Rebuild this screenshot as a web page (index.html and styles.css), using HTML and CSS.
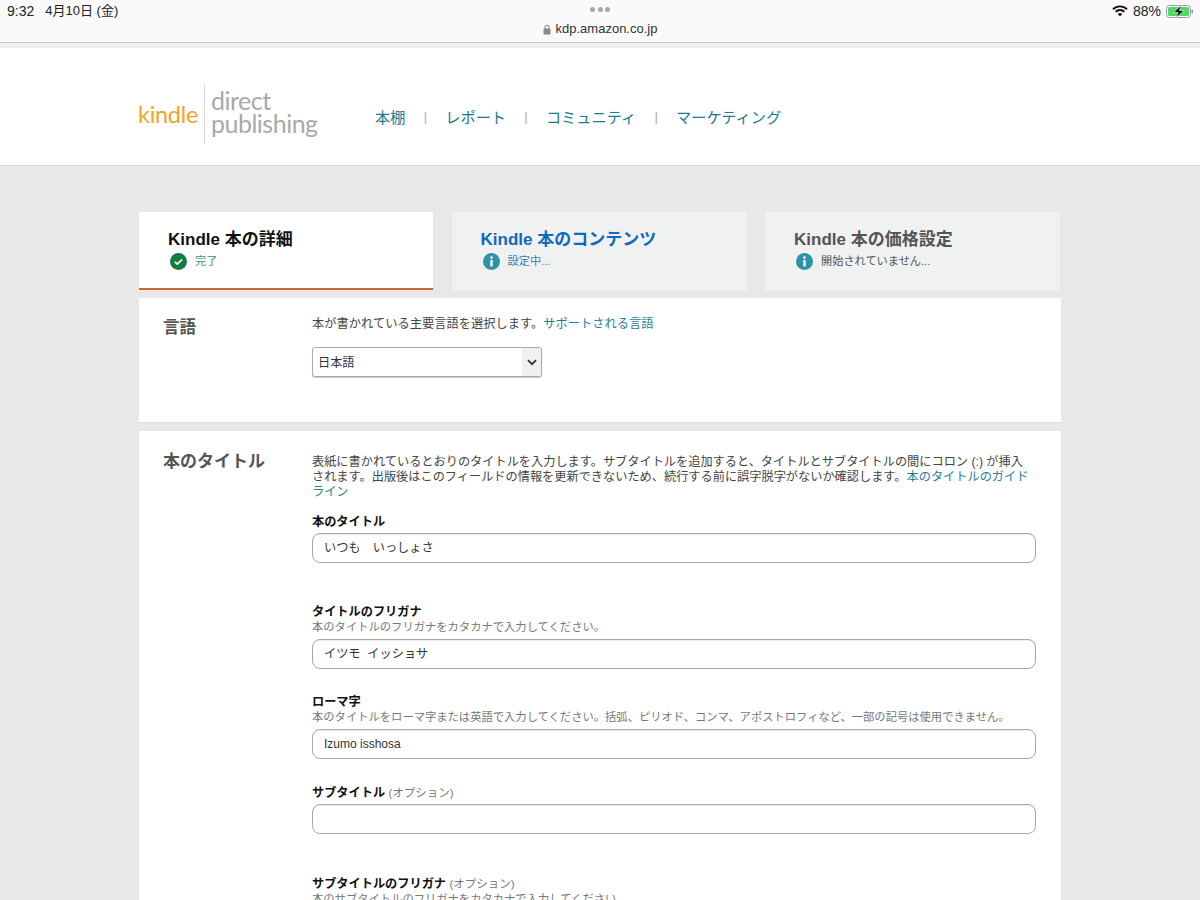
FILE: index.html
```html
<!DOCTYPE html>
<html lang="ja">
<head>
<meta charset="utf-8">
<title>Kindle Direct Publishing</title>
<link rel="stylesheet" href="styles.css">
</head>
<body>
<div class="browser">
  <div class="status">
    <div class="status-left"><span class="clock">9:32</span><span>4月10日 (金)</span></div>
    <div class="status-center">
      <div class="dots"><i></i><i></i><i></i></div>
      <div class="url">
        <svg class="lock" width="8" height="11" viewBox="0 0 8 11"><path d="M2 5V3.2a2 2 0 0 1 4 0V5" fill="none" stroke="#8a8a8a" stroke-width="1.1"/><rect x="0.5" y="4.6" width="7" height="6" rx="1" fill="#8a8a8a"/></svg>
        <span>kdp.amazon.co.jp</span>
      </div>
    </div>
    <div class="status-right">
      <svg width="16" height="12" viewBox="0 0 16 12"><path d="M1 4.2a10 10 0 0 1 14 0" fill="none" stroke="#111" stroke-width="1.9"/><path d="M3.6 6.8a6.3 6.3 0 0 1 8.8 0" fill="none" stroke="#111" stroke-width="1.9"/><path d="M8 11.5 5.8 9.1a3 3 0 0 1 4.4 0z" fill="#111"/></svg>
      <span>88%</span>
      <svg width="27" height="13" viewBox="0 0 27 13"><rect x="0.5" y="0.5" width="24" height="12" rx="3" fill="#fff" stroke="#9a9a9a"/><rect x="2" y="2" width="21" height="9" rx="1.5" fill="#4cd964"/><rect x="25.5" y="4.5" width="1.5" height="4" rx="0.7" fill="#9a9a9a"/><path d="M15.5 0 7.5 7.5h4.5L10 13l8-7.5h-4.5z" fill="#111" stroke="#fff" stroke-width="0.6"/></svg>
    </div>
  </div>
</div>

<header class="site">
  <div class="logo">
    <span class="logo-kindle">kindle</span>
    <span class="logo-rest"><span>direct</span><span>publishing</span></span>
  </div>
  <nav class="nav">
    <a>本棚</a><b>|</b><a>レポート</a><b>|</b><a>コミュニティ</a><b>|</b><a>マーケティング</a>
  </nav>
</header>

<main class="main">
  <div class="tabs">
    <div class="tab tab-active">
      <div class="tab-title">Kindle 本の詳細</div>
      <div class="tab-state state-done">
        <svg width="17" height="17" viewBox="0 0 17 17"><circle cx="8.5" cy="8.5" r="8.5" fill="#127d3f"/><path d="M4.8 8.8 7.3 11l4.9-4.7" fill="none" stroke="#fff" stroke-width="1.7"/></svg>
        <span>完了</span>
      </div>
    </div>
    <div class="tab">
      <div class="tab-title title-blue">Kindle 本のコンテンツ</div>
      <div class="tab-state state-blue">
        <svg width="17" height="17" viewBox="0 0 17 17"><circle cx="8.5" cy="8.5" r="8.5" fill="#2f93a8"/><circle cx="8.5" cy="4.6" r="1.3" fill="#fff"/><rect x="7.3" y="7" width="2.4" height="6.4" fill="#fff"/></svg>
        <span>設定中...</span>
      </div>
    </div>
    <div class="tab">
      <div class="tab-title title-gray">Kindle 本の価格設定</div>
      <div class="tab-state state-gray">
        <svg width="17" height="17" viewBox="0 0 17 17"><circle cx="8.5" cy="8.5" r="8.5" fill="#2f93a8"/><circle cx="8.5" cy="4.6" r="1.3" fill="#fff"/><rect x="7.3" y="7" width="2.4" height="6.4" fill="#fff"/></svg>
        <span>開始されていません...</span>
      </div>
    </div>
  </div>

  <section class="panel panel-lang">
    <h2 class="panel-head">言語</h2>
    <div class="panel-body">
      <p class="desc">本が書かれている主要言語を選択します。<a>サポートされる言語</a></p>
      <div class="select">
        <span class="select-text">日本語</span>
        <span class="select-btn"><svg width="10" height="7" viewBox="0 0 10 7"><path d="M1 1.2 5 5.2l4-4" fill="none" stroke="#333" stroke-width="1.8"/></svg></span>
      </div>
    </div>
  </section>

  <section class="panel panel-title">
    <h2 class="panel-head head-large">本のタイトル</h2>
    <div class="panel-body body-title">
      <p class="desc desc-block">表紙に書かれているとおりのタイトルを入力します。サブタイトルを追加すると、タイトルとサブタイトルの間にコロン (:) が挿入されます。出版後はこのフィールドの情報を更新できないため、続行する前に誤字脱字がないか確認します。<a>本のタイトルのガイドライン</a></p>
      <div class="field f1">
        <label>本のタイトル</label>
        <div class="input">いつも　いっしょさ</div>
      </div>
      <div class="field f2">
        <label>タイトルのフリガナ</label>
        <small>本のタイトルのフリガナをカタカナで入力してください。</small>
        <div class="input">イツモ&nbsp; イッショサ</div>
      </div>
      <div class="field f3">
        <label>ローマ字</label>
        <small>本のタイトルをローマ字または英語で入力してください。括弧、ピリオド、コンマ、アポストロフィなど、一部の記号は使用できません。</small>
        <div class="input input-latin">Izumo isshosa</div>
      </div>
      <div class="field f4">
        <label>サブタイトル <em>(オプション)</em></label>
        <div class="input"></div>
      </div>
      <div class="field f5">
        <label>サブタイトルのフリガナ <em>(オプション)</em></label>
        <small>本のサブタイトルのフリガナをカタカナで入力してください。</small>
      </div>
    </div>
  </section>
</main>
</body>
</html>
```
FILE: styles.css
```css
* { box-sizing: border-box; }
html, body { margin: 0; height: 900px; overflow: hidden; }
body {
  background: #e8e8e8;
  font-family: "Liberation Sans", "Noto Sans CJK JP", sans-serif;
  color: #333;
}
a { color: #1f7f95; }

.browser { background: #f0f0f0; height: 48px; }
.status {
  height: 43px;
  background: #fafafa;
  border-bottom: 1px solid #c9c9c9;
  display: grid;
  grid-template-columns: 1fr auto 1fr;
  padding: 0 7px 0 7px;
}
.status-left { display: flex; gap: 11px; font-size: 13px; color: #222; padding-top: 3px; line-height: 16px; }
.clock { font-size: 14px; }
.status-center { display: flex; flex-direction: column; align-items: center; padding-top: 7px; }
.dots { display: flex; gap: 2.5px; height: 7px; }
.dots i { width: 5px; height: 5px; border-radius: 50%; background: #a8a8a8; display: block; }
.url { display: flex; align-items: center; gap: 5px; font-size: 13px; color: #333; margin-top: 7px; line-height: 16px; }
.status-right { display: flex; justify-content: flex-end; align-items: flex-start; gap: 5px; font-size: 14px; color: #222; padding-top: 3px; line-height: 16px; }
.status-right svg { margin-top: 2px; }

.site {
  height: 118px;
  background: #fff;
  border-bottom: 1px solid #d4d4d4;
  display: flex;
  align-items: center;
  padding-left: 138px;
}
.logo { display: flex; align-items: center; width: 237px; height: 60px; margin-top: 15px; }
.logo-kindle { font-family: Lato, sans-serif; font-size: 23.5px; color: #f7a11f; width: 66px; letter-spacing: -0.3px; }
.logo-rest {
  display: flex; flex-direction: column;
  border-left: 1px solid #d8d8d8;
  height: 60px;
  padding-left: 6px;
  font-family: Lato, sans-serif;
  font-size: 25px;
  line-height: 23px;
  color: #a9a9a9;
  letter-spacing: -0.5px;
  padding-top: 5px;
}
.nav { display: flex; align-items: center; font-size: 15.2px; margin-top: 19px; }
.nav a { color: #1d7a8f; }
.nav b { color: #aaa; font-weight: normal; font-size: 13px; margin: 0 18.25px; }

.main { width: 922px; margin-left: 139px; padding-top: 46px; }
.tabs { display: grid; grid-template-columns: 294px 295px 295px; column-gap: 18.5px; }
.tab { height: 78px; background: #f0f1f1; padding: 18px 0 0 29px; }
.tab-active { background: #fff; border-bottom: 2px solid #c9692a; }
.tab-title { font-size: 17px; font-weight: bold; line-height: 20px; color: #111; }
.title-blue { color: #0f69bd; }
.title-gray { color: #555; }
.tab-state { display: flex; align-items: center; gap: 8px; font-size: 11.2px; margin: 3px 0 0 2px; line-height: 17px; }
.state-done { color: #3f9a66; }
.state-blue { color: #3a7fb0; }
.state-gray { color: #555; }

.panel { background: #fff; display: flex; padding-left: 24px; border-bottom: 1px solid #ddd; margin-top: 8px; }
.panel-lang { height: 125px; }
.panel-head { width: 149px; margin: 0; font-size: 16.5px; font-weight: bold; color: #555; line-height: 20px; padding-top: 19px; }
.head-large { font-size: 17px; padding-top: 21px; }
.panel-body { width: 724px; padding-top: 18px; }
.desc { margin: 0; font-size: 12.25px; line-height: 16px; color: #444; }
.select {
  width: 230px; height: 30px; margin-top: 15px;
  display: flex; align-items: center; justify-content: space-between;
  border: 1px solid #aaa; border-radius: 3px; background: #fff;
  box-shadow: 0 1px 1px rgba(0,0,0,.2);
  font-size: 12.2px; color: #333;
}
.select-text { padding-left: 5px; }
.select-btn { width: 19px; height: 28px; background: #f0f0f0; display: flex; align-items: center; justify-content: center; border-radius: 0 3px 3px 0; }

.panel-title { height: 600px; border-bottom: 0; }
.body-title { padding-top: 24px; }
.desc-block { font-size: 12.2px; line-height: 15px; width: 720px; }
.field label { display: block; font-size: 12.2px; font-weight: bold; color: #111; line-height: 16px; }
.field em { font-style: normal; font-weight: normal; color: #777; font-size: 11.5px; }
.field small { display: block; font-size: 11.3px; color: #777; line-height: 13px; margin-top: 1px; }
.input {
  width: 724px; height: 30px;
  border: 1px solid #a8a8a8; border-radius: 8px;
  background: #fff;
  box-shadow: inset 0 1px 1px rgba(0,0,0,.08);
  font-size: 12.2px; line-height: 28px; padding-left: 11px; color: #333;
}
.input-latin { font-size: 12px; }
.field label + .input { margin-top: 3px; }
.field small + .input { margin-top: 5px; }
.f1 { margin-top: 14px; }
.f2 { margin-top: 41px; }
.f3 { margin-top: 25px; }
.f4 { margin-top: 26px; }
.f5 { margin-top: 42px; }
```
